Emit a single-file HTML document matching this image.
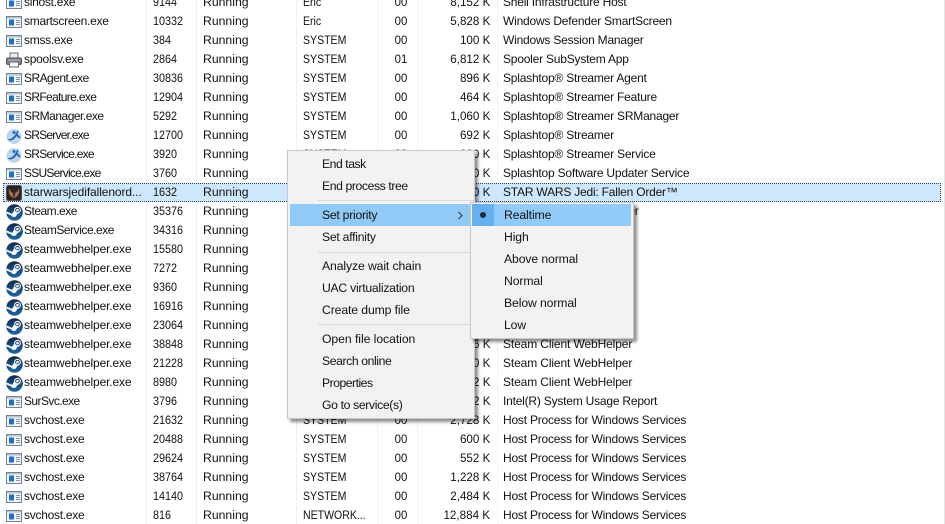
<!DOCTYPE html>
<html><head><meta charset="utf-8"><style>
html,body{margin:0;padding:0;background:#fff}
#p{position:relative;width:945px;height:524px;overflow:hidden;background:#fff;font:12px/19px "Liberation Sans",sans-serif;color:#111;filter:blur(.3px)}
.l{position:absolute;top:0;height:524px;width:1px;background:#edf2f8}
#rows{position:absolute;left:0;top:-7px;width:945px}
.r{position:relative;height:19px;white-space:nowrap}
.r span{position:absolute;top:0}
.r svg{position:absolute;left:6px;top:2px;width:16px;height:16px}
.r svg.big{left:5.500px;top:1.500px;width:17px;height:17px}
.n{left:24px;letter-spacing:-.27px}
.n.w{letter-spacing:-.15px}
.n.k{letter-spacing:-.65px}
.i{left:153px;transform:scaleX(.9);transform-origin:0 50%}
.s{left:203px;font-size:12.200px;letter-spacing:.02px}
.u{left:303px;font-size:12.200px;transform:scaleX(.865);transform-origin:0 50%}
.c{right:538px;transform:scaleX(.95);transform-origin:100% 50%}
.m{right:455px;transform:scaleX(.97);transform-origin:100% 50%}
.d{left:503px;letter-spacing:-.21px}
.sel{background:#cde7fd;outline:1px dotted #33445a;outline-offset:-1px;margin:0 4px 0 3px}
.sel svg{left:3px}.sel .n{left:21px;letter-spacing:-.1px}.sel .i{left:150px}.sel .s{left:200px}.sel .u{left:300px}.sel .d{left:500px}.sel .c{right:534px}.sel .m{right:451px}
.menu{position:absolute;background:#f2f2f2;border:1px solid #c8c8c8;box-sizing:border-box;box-shadow:3px 3px 3px rgba(0,0,0,.45);font-size:12.200px;letter-spacing:-.1px;line-height:22px;color:#111}
.t{position:absolute;white-space:nowrap}
.h{position:absolute;background:#91c9f7}
.sp{position:absolute;height:1px;background:#d7d7d7}
</style></head><body><div id="p">
<svg width="0" height="0" style="position:absolute"><defs>
<linearGradient id="g" x1="0" y1="0" x2="0" y2="1"><stop offset="0" stop-color="#142a4a"/><stop offset="1" stop-color="#1d68a8"/></linearGradient>
<symbol id="a" viewBox="0 0 16 16"><rect x=".5" y="2.500" width="15" height="11" fill="#f4f7fa" stroke="#75828e"/><rect x="1" y="3" width="14" height="1.600" fill="#b9c8d6"/><rect x="3" y="5.500" width="5" height="6" fill="#1f70c8"/><path d="M10 6.500h4M10 8.500h4M10 10.500h4" stroke="#7d92a8"/></symbol>
<symbol id="b" viewBox="0 0 16 16"><circle cx="8" cy="8.500" r="7.500" fill="#bfd5ec"/><path d="M1.500 10.500C4 13 9 8 10 5l1.500-2.500 1 .8L11.500 6l3 3.500-1 1L10.500 8C9 11 5 14 1.800 11.500z" fill="#1c68b8"/><circle cx="8" cy="4.500" r="1.500" fill="#1c68b8"/></symbol>
<symbol id="st" viewBox="0 0 16 16"><circle cx="8" cy="8" r="7.800" fill="url(#g)"/><path d="M.2 8.800l4.800 2a2.800 2.800 0 0 0 5.200-.8l2.300-1.500L7.500 6.500 5.600 9.300.4 6.900z" fill="#f6f8fa"/><circle cx="10.800" cy="5.800" r="2.700" fill="none" stroke="#eef3f8" stroke-width="1.100"/><circle cx="10.800" cy="5.800" r="1.300" fill="#eef3f8"/></symbol>
<symbol id="pr" viewBox="0 0 16 16"><rect x="4" y="1" width="8" height="6" fill="#e9edf0" stroke="#6b7177"/><rect x=".5" y="6" width="15" height="6.500" rx="1.500" fill="#7c8288" stroke="#50565c"/><rect x="2" y="7.500" width="12" height="1.500" fill="#a6abb0"/><rect x="3.500" y="10" width="9" height="5" fill="#f2f4f5" stroke="#6b7177"/></symbol>
<symbol id="sw" viewBox="0 0 16 16"><rect x=".5" y=".5" width="15" height="15" rx="2" fill="#2a2220" stroke="#56504c"/><path d="M3 3c-1 5 1 9 5 10 4-1 6-5 5-10-1 3-2 4-3 4L8 11 6 7C5 7 4 6 3 3z" fill="#a5715a"/><path d="M8 4v8" stroke="#3a2a26" stroke-width="1.500"/></symbol>
</defs></svg>
<div class="l" style="left:146px"></div><div class="l" style="left:196px"></div><div class="l" style="left:296px"></div><div class="l" style="left:377px"></div><div class="l" style="left:417px"></div><div class="l" style="left:497px"></div><div class="l" style="left:944px;background:#e4e4e4"></div>
<div id="rows">
<div class="r"><svg><use href="#a"/></svg><span class="n">sihost.exe</span><span class="i">9144</span><span class="s">Running</span><span class="u">Eric</span><span class="c">00</span><span class="m">8,152 K</span><span class="d">Shell Infrastructure Host</span></div>
<div class="r"><svg><use href="#a"/></svg><span class="n">smartscreen.exe</span><span class="i">10332</span><span class="s">Running</span><span class="u">Eric</span><span class="c">00</span><span class="m">5,828 K</span><span class="d">Windows Defender SmartScreen</span></div>
<div class="r"><svg><use href="#a"/></svg><span class="n">smss.exe</span><span class="i">384</span><span class="s">Running</span><span class="u">SYSTEM</span><span class="c">00</span><span class="m">100 K</span><span class="d">Windows Session Manager</span></div>
<div class="r"><svg><use href="#pr"/></svg><span class="n">spoolsv.exe</span><span class="i">2864</span><span class="s">Running</span><span class="u">SYSTEM</span><span class="c">01</span><span class="m">6,812 K</span><span class="d">Spooler SubSystem App</span></div>
<div class="r"><svg><use href="#a"/></svg><span class="n k" style="letter-spacing:-.54px">SRAgent.exe</span><span class="i">30836</span><span class="s">Running</span><span class="u">SYSTEM</span><span class="c">00</span><span class="m">896 K</span><span class="d">Splashtop® Streamer Agent</span></div>
<div class="r"><svg><use href="#a"/></svg><span class="n k">SRFeature.exe</span><span class="i">12904</span><span class="s">Running</span><span class="u">SYSTEM</span><span class="c">00</span><span class="m">464 K</span><span class="d">Splashtop® Streamer Feature</span></div>
<div class="r"><svg><use href="#a"/></svg><span class="n k" style="letter-spacing:-.5px">SRManager.exe</span><span class="i">5292</span><span class="s">Running</span><span class="u">SYSTEM</span><span class="c">00</span><span class="m">1,060 K</span><span class="d">Splashtop® Streamer SRManager</span></div>
<div class="r"><svg><use href="#b"/></svg><span class="n k" style="letter-spacing:-.77px">SRServer.exe</span><span class="i">12700</span><span class="s">Running</span><span class="u">SYSTEM</span><span class="c">00</span><span class="m">692 K</span><span class="d">Splashtop® Streamer</span></div>
<div class="r"><svg><use href="#b"/></svg><span class="n k" style="letter-spacing:-.73px">SRService.exe</span><span class="i">3920</span><span class="s">Running</span><span class="u">SYSTEM</span><span class="c">00</span><span class="m">980 K</span><span class="d">Splashtop® Streamer Service</span></div>
<div class="r"><svg><use href="#a"/></svg><span class="n k" style="letter-spacing:-.77px">SSUService.exe</span><span class="i">3760</span><span class="s">Running</span><span class="u">SYSTEM</span><span class="c">00</span><span class="m">980 K</span><span class="d">Splashtop Software Updater Service</span></div>
<div class="r sel"><svg><use href="#sw"/></svg><span class="n">starwarsjedifallenord...</span><span class="i">1632</span><span class="s">Running</span><span class="u">Eric</span><span class="c">00</span><span class="m">980 K</span><span class="d">STAR WARS Jedi: Fallen Order™</span></div>
<div class="r"><svg class="big"><use href="#st"/></svg><span class="n k" style="letter-spacing:-.5px">Steam.exe</span><span class="i">35376</span><span class="s">Running</span><span class="u">Eric</span><span class="c">00</span><span class="m">1,000 K</span><span class="d">Steam Client Bootstrapper</span></div>
<div class="r"><svg class="big"><use href="#st"/></svg><span class="n k" style="letter-spacing:-.46px">SteamService.exe</span><span class="i">34316</span><span class="s">Running</span></div>
<div class="r"><svg class="big"><use href="#st"/></svg><span class="n w">steamwebhelper.exe</span><span class="i">15580</span><span class="s">Running</span></div>
<div class="r"><svg class="big"><use href="#st"/></svg><span class="n w">steamwebhelper.exe</span><span class="i">7272</span><span class="s">Running</span></div>
<div class="r"><svg class="big"><use href="#st"/></svg><span class="n w">steamwebhelper.exe</span><span class="i">9360</span><span class="s">Running</span></div>
<div class="r"><svg class="big"><use href="#st"/></svg><span class="n w">steamwebhelper.exe</span><span class="i">16916</span><span class="s">Running</span></div>
<div class="r"><svg class="big"><use href="#st"/></svg><span class="n w">steamwebhelper.exe</span><span class="i">23064</span><span class="s">Running</span></div>
<div class="r"><svg class="big"><use href="#st"/></svg><span class="n w">steamwebhelper.exe</span><span class="i">38848</span><span class="s">Running</span><span class="m">1,116 K</span><span class="d" style="letter-spacing:-.12px">Steam Client WebHelper</span></div>
<div class="r"><svg class="big"><use href="#st"/></svg><span class="n w">steamwebhelper.exe</span><span class="i">21228</span><span class="s">Running</span><span class="m">1,000 K</span><span class="d" style="letter-spacing:-.12px">Steam Client WebHelper</span></div>
<div class="r"><svg class="big"><use href="#st"/></svg><span class="n w">steamwebhelper.exe</span><span class="i">8980</span><span class="s">Running</span><span class="m">1,112 K</span><span class="d" style="letter-spacing:-.12px">Steam Client WebHelper</span></div>
<div class="r"><svg><use href="#a"/></svg><span class="n k" style="letter-spacing:-.57px">SurSvc.exe</span><span class="i">3796</span><span class="s">Running</span><span class="m">1,112 K</span><span class="d">Intel(R) System Usage Report</span></div>
<div class="r"><svg><use href="#a"/></svg><span class="n">svchost.exe</span><span class="i">21632</span><span class="s">Running</span><span class="u">SYSTEM</span><span class="c">00</span><span class="m">2,728 K</span><span class="d">Host Process for Windows Services</span></div>
<div class="r"><svg><use href="#a"/></svg><span class="n">svchost.exe</span><span class="i">20488</span><span class="s">Running</span><span class="u">SYSTEM</span><span class="c">00</span><span class="m">600 K</span><span class="d">Host Process for Windows Services</span></div>
<div class="r"><svg><use href="#a"/></svg><span class="n">svchost.exe</span><span class="i">29624</span><span class="s">Running</span><span class="u">SYSTEM</span><span class="c">00</span><span class="m">552 K</span><span class="d">Host Process for Windows Services</span></div>
<div class="r"><svg><use href="#a"/></svg><span class="n">svchost.exe</span><span class="i">38764</span><span class="s">Running</span><span class="u">SYSTEM</span><span class="c">00</span><span class="m">1,228 K</span><span class="d">Host Process for Windows Services</span></div>
<div class="r"><svg><use href="#a"/></svg><span class="n">svchost.exe</span><span class="i">14140</span><span class="s">Running</span><span class="u">SYSTEM</span><span class="c">00</span><span class="m">2,484 K</span><span class="d">Host Process for Windows Services</span></div>
<div class="r"><svg><use href="#a"/></svg><span class="n">svchost.exe</span><span class="i">816</span><span class="s">Running</span><span class="u">NETWORK...</span><span class="c">00</span><span class="m">12,884 K</span><span class="d">Host Process for Windows Services</span></div>
</div>
<div class="menu" style="left:287px;top:150px;width:188px;height:269px">
<div class="h" style="left:2px;top:53px;width:181px;height:22px"></div>
<div class="sp" style="left:30px;top:49px;width:156px"></div>
<div class="sp" style="left:30px;top:101px;width:156px"></div>
<div class="sp" style="left:30px;top:173px;width:156px"></div>
<div class="t" style="left:34px;top:2px;letter-spacing:-.45px">End task</div>
<div class="t" style="left:34px;top:24px;letter-spacing:-.4px">End process tree</div>
<div class="t" style="left:34px;top:53px;letter-spacing:-.25px">Set priority</div>
<svg style="position:absolute;left:169px;top:60px" width="7" height="9"><path d="M1.500 1l3.500 3.500-3.500 3.500" fill="none" stroke="#333"/></svg>
<div class="t" style="left:34px;top:75px;letter-spacing:-.25px">Set affinity</div>
<div class="t" style="left:34px;top:104px">Analyze wait chain</div>
<div class="t" style="left:34px;top:126px;letter-spacing:-.25px">UAC virtualization</div>
<div class="t" style="left:34px;top:148px">Create dump file</div>
<div class="t" style="left:34px;top:177px;letter-spacing:-.05px">Open file location</div>
<div class="t" style="left:34px;top:199px;letter-spacing:-.4px">Search online</div>
<div class="t" style="left:34px;top:221px;letter-spacing:-.5px">Properties</div>
<div class="t" style="left:34px;top:243px;letter-spacing:-.35px">Go to service(s)</div>
</div>
<div class="menu" style="left:470px;top:202px;width:164px;height:137px">
<div class="h" style="left:1px;top:1px;width:159px;height:22px"></div>
<div class="h" style="left:1px;top:1px;width:22px;height:22px;background:#65b1f0"></div>
<div style="position:absolute;left:9px;top:9px;width:6px;height:6px;border-radius:50%;background:#1f2a36"></div>
<div class="t" style="left:33px;top:1px">Realtime</div>
<div class="t" style="left:33px;top:23px">High</div>
<div class="t" style="left:33px;top:45px">Above normal</div>
<div class="t" style="left:33px;top:67px">Normal</div>
<div class="t" style="left:33px;top:89px">Below normal</div>
<div class="t" style="left:33px;top:111px">Low</div>
</div>
</div></body></html>
